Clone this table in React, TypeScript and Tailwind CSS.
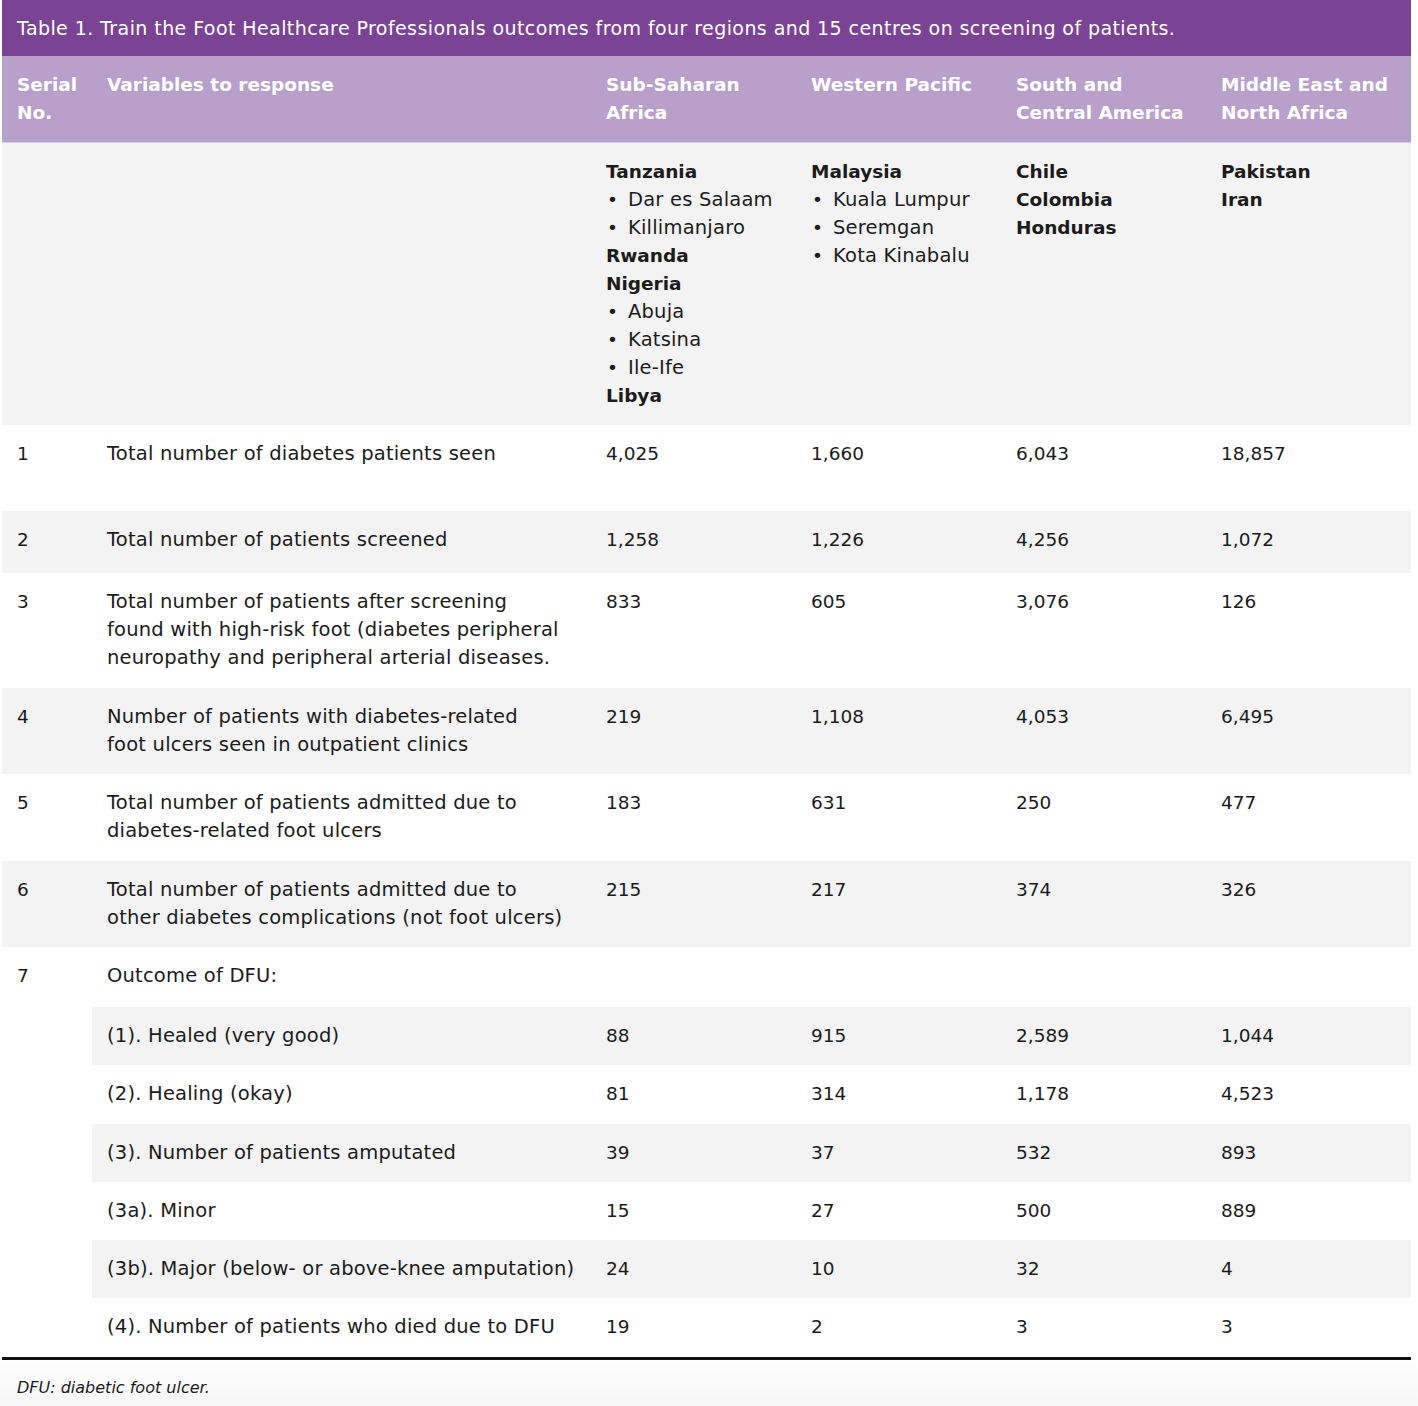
import React from "react";

type Region = { name: string; items: { label: string; bold?: boolean }[] };

const regions: Region[] = [
  {
    name: "Sub-Saharan",
    items: [
      { label: "Tanzania", bold: true },
      { label: "Dar es Salaam" },
      { label: "Killimanjaro" },
      { label: "Rwanda", bold: true },
      { label: "Nigeria", bold: true },
      { label: "Abuja" },
      { label: "Katsina" },
      { label: "Ile-Ife" },
      { label: "Libya", bold: true },
    ],
  },
  {
    name: "Western Pacific",
    items: [
      { label: "Malaysia", bold: true },
      { label: "Kuala Lumpur" },
      { label: "Seremgan" },
      { label: "Kota Kinabalu" },
    ],
  },
  {
    name: "South and Central America",
    items: [
      { label: "Chile", bold: true },
      { label: "Colombia", bold: true },
      { label: "Honduras", bold: true },
    ],
  },
  {
    name: "Middle East",
    items: [
      { label: "Pakistan", bold: true },
      { label: "Iran", bold: true },
    ],
  },
];

// label lines are split where the source table wraps them
const rows = [
  { no: "1", label: ["Total number of diabetes patients seen"], values: ["4,025", "1,660", "6,043", "18,857"], h: "h-[86px]" },
  { no: "2", label: ["Total number of patients screened"], values: ["1,258", "1,226", "4,256", "1,072"], h: "h-[62px]" },
  {
    no: "3",
    label: [
      "Total number of patients after screening",
      "found with high-risk foot (diabetes peripheral",
      "neuropathy and peripheral arterial diseases.",
    ],
    values: ["833", "605", "3,076", "126"],
    h: "h-[115px]",
  },
  {
    no: "4",
    label: ["Number of patients with diabetes-related", "foot ulcers seen in outpatient clinics"],
    values: ["219", "1,108", "4,053", "6,495"],
    h: "h-[86px]",
  },
  {
    no: "5",
    label: ["Total number of patients admitted due to", "diabetes-related foot ulcers"],
    values: ["183", "631", "250", "477"],
    h: "h-[87px]",
  },
  {
    no: "6",
    label: ["Total number of patients admitted due to", "other diabetes complications (not foot ulcers)"],
    values: ["215", "217", "374", "326"],
    h: "h-[85px]",
  },
];

const outcomes = [
  { label: "(1). Healed (very good)", values: ["88", "915", "2,589", "1,044"] },
  { label: "(2). Healing (okay)", values: ["81", "314", "1,178", "4,523"] },
  { label: "(3). Number of patients amputated", values: ["39", "37", "532", "893"] },
  { label: "(3a). Minor", values: ["15", "27", "500", "889"] },
  { label: "(3b). Major (below- or above-knee amputation)", values: ["24", "10", "32", "4"] },
  { label: "(4). Number of patients who died due to DFU", values: ["19", "2", "3", "3"] },
];

const cell = "px-[15px] py-[15px] align-top";
const text = "text-[19.5px] tracking-[0.2px]";

export default function App() {
  return (
    <div
      className="min-h-[1406px] w-[1418px] bg-white text-[#1b1b1b]"
      style={{ fontFamily: '"DejaVu Sans", "Open Sans", sans-serif' }}
    >
      <div className="ml-[2px] w-[1409px]">
        <div className="flex h-[56px] items-center bg-[#7b4394] px-[15px] text-[19px] tracking-[0.42px] text-white">
          Table 1. Train the Foot Healthcare Professionals outcomes from four regions and 15 centres on screening of patients.
        </div>
        <table className="w-full table-fixed border-collapse text-[18.5px] leading-[28px]">
          <colgroup>
            <col className="w-[90px]" />
            <col className="w-[499px]" />
            <col className="w-[205px]" />
            <col className="w-[205px]" />
            <col className="w-[205px]" />
            <col className="w-[205px]" />
          </colgroup>
          <thead>
            <tr className="h-[86px] border-b border-[#dcd0e6] bg-[#b8a0cb] text-left text-white">
              <th className={cell + " font-bold"}>
                Serial
                <br />
                No.
              </th>
              <th className={cell + " font-bold"}>Variables to response</th>
              <th className={cell + " font-bold"}>
                Sub-Saharan
                <br />
                Africa
              </th>
              <th className={cell + " font-bold whitespace-nowrap"}>Western Pacific</th>
              <th className={cell + " font-bold whitespace-nowrap"}>
                South and
                <br />
                Central America
              </th>
              <th className={cell + " font-bold whitespace-nowrap"}>
                Middle East and
                <br />
                North Africa
              </th>
            </tr>
          </thead>
          <tbody>
            <tr className="h-[281px] bg-[#f3f3f3]">
              <td className={cell} />
              <td className={cell} />
              {regions.map((r) => (
                <td key={r.name} className={cell}>
                  {r.items.map((it) =>
                    it.bold ? (
                      <div key={it.label} className="font-bold">
                        {it.label}
                      </div>
                    ) : (
                      <div key={it.label} className="flex whitespace-nowrap">
                        <span className="w-[22px] shrink-0 pl-[1px]">•</span>
                        <span className={text}>{it.label}</span>
                      </div>
                    )
                  )}
                </td>
              ))}
            </tr>
            {rows.map((r, i) => (
              <tr key={r.no} className={`${r.h} ${i % 2 === 1 ? "bg-[#f3f3f3]" : "bg-white"}`}>
                <td className={cell}>{r.no}</td>
                <td className={cell + " " + text}>
                  {r.label.map((l) => (
                    <div key={l} className="whitespace-nowrap">
                      {l}
                    </div>
                  ))}
                </td>
                {r.values.map((v, j) => (
                  <td key={j} className={cell}>
                    {v}
                  </td>
                ))}
              </tr>
            ))}
            <tr className="h-[60px] bg-white">
              <td className={cell} rowSpan={7}>
                7
              </td>
              <td className={cell + " " + text} colSpan={5}>
                Outcome of DFU:
              </td>
            </tr>
            {outcomes.map((o, i) => (
              <tr key={o.label} className={`h-[58.3px] ${i % 2 === 0 ? "bg-[#f3f3f3]" : "bg-white"}`}>
                <td className={cell + " whitespace-nowrap " + text}>{o.label}</td>
                {o.values.map((v, j) => (
                  <td key={j} className={cell}>
                    {v}
                  </td>
                ))}
              </tr>
            ))}
          </tbody>
        </table>
        <div className="h-[3px] bg-[#111]" />
      </div>
      <div className="h-[48px] bg-gradient-to-b from-white to-[#f6f6f6] px-[17px] pt-[16px] text-[16px] italic text-[#1b1b1b]">
        DFU: diabetic foot ulcer.
      </div>
    </div>
  );
}
